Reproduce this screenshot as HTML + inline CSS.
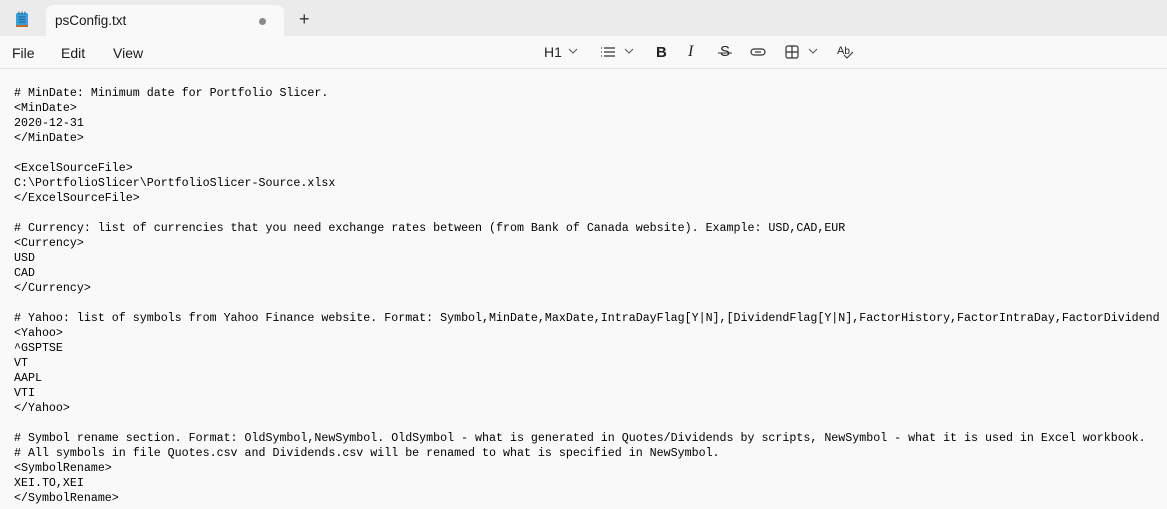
<!DOCTYPE html>
<html><head><meta charset="utf-8"><style>
*{margin:0;padding:0;box-sizing:border-box}
body{width:1167px;height:509px;overflow:hidden;background:#f9f9f9;font-family:"Liberation Sans",sans-serif;position:relative}
.tabbar{position:absolute;left:0;top:0;width:1167px;height:36px;background:#ebebeb}
.tab{position:absolute;left:46px;top:5px;width:238px;height:31px;background:#f9f9f9;border-radius:7px 7px 0 0}
.tab span{position:absolute;left:9px;top:8px;font-size:13.5px;color:#1a1a1a}
.dot{position:absolute;left:213px;top:13px;width:7px;height:7px;border-radius:50%;background:#8a8a8a}
.plus{position:absolute;left:299px;top:9px;font-size:18px;color:#333;font-weight:300}
.menu{position:absolute;top:45px;font-size:14px;color:#1a1a1a}
.sep{position:absolute;left:0;top:68px;width:1167px;height:1px;background:#e5e5e5}
pre{position:absolute;left:14px;top:85.5px;font-family:"Liberation Mono",monospace;font-size:11.65px;line-height:15px;color:#000}
.tb{position:absolute;top:44px;font-size:14px;color:#222}
</style></head><body>
<div class="tabbar">
<svg style="position:absolute;left:15px;top:11px" width="14" height="17" viewBox="0 0 14 17"><rect x="1" y="2" width="12" height="14" rx="1.5" fill="#3b9fd8"/><rect x="1" y="14" width="12" height="2" fill="#c06a2a"/><path d="M3.5 6h7M3.5 8.5h7M3.5 11h7" stroke="#1d5f8a" stroke-width="1"/><path d="M4 0.5v3M7 0.5v3M10 0.5v3" stroke="#1d5f8a" stroke-width="1"/></svg>
<div class="tab"><span>psConfig.txt</span><div class="dot"></div></div>
<div class="plus">+</div>
</div>
<div class="menu" style="left:12px">File</div>
<div class="menu" style="left:61px">Edit</div>
<div class="menu" style="left:113px">View</div>
<div class="tb" style="left:544px">H1</div>
<svg style="position:absolute;left:568px;top:48px" width="10" height="6"><path d="M1 1l4 4 4-4" stroke="#555" fill="none"/></svg>
<svg style="position:absolute;left:600px;top:46px" width="16" height="12"><path d="M1 2h1M1 6h1M1 10h1M4 2h11M4 6h11M4 10h11" stroke="#333" stroke-width="1.2"/></svg>
<svg style="position:absolute;left:624px;top:48px" width="10" height="6"><path d="M1 1l4 4 4-4" stroke="#555" fill="none"/></svg>
<div class="tb" style="left:656px;font-weight:bold;font-size:15px">B</div>
<div class="tb" style="left:688px;font-family:'Liberation Serif',serif;font-style:italic;font-size:16px;top:43px">I</div>
<div class="tb" style="left:720px;font-size:15px;top:43px">S</div>
<svg style="position:absolute;left:718px;top:52px" width="14" height="2"><path d="M0 1h14" stroke="#333"/></svg>
<svg style="position:absolute;left:750px;top:46px" width="16" height="12"><rect x="1" y="3" width="14" height="6" rx="3" fill="none" stroke="#333" stroke-width="1.2"/><path d="M5 6h6" stroke="#333" stroke-width="1.2"/></svg>
<svg style="position:absolute;left:785px;top:45px" width="14" height="14"><rect x="1" y="1" width="12" height="12" rx="2" fill="none" stroke="#333" stroke-width="1.2"/><path d="M7 1v12M1 7h12" stroke="#333" stroke-width="1.2"/></svg>
<svg style="position:absolute;left:808px;top:48px" width="10" height="6"><path d="M1 1l4 4 4-4" stroke="#555" fill="none"/></svg>
<div class="tb" style="left:837px;font-size:11px;top:45px">A<span style="font-size:10px">b</span></div>
<svg style="position:absolute;left:842px;top:50px" width="12" height="10"><path d="M2 5l3 3 6-6" stroke="#333" fill="none" stroke-width="1.1"/></svg>
<div class="sep"></div>
<pre># MinDate: Minimum date for Portfolio Slicer.
&lt;MinDate&gt;
2020-12-31
&lt;/MinDate&gt;

&lt;ExcelSourceFile&gt;
C:\PortfolioSlicer\PortfolioSlicer-Source.xlsx
&lt;/ExcelSourceFile&gt;

# Currency: list of currencies that you need exchange rates between (from Bank of Canada website). Example: USD,CAD,EUR
&lt;Currency&gt;
USD
CAD
&lt;/Currency&gt;

# Yahoo: list of symbols from Yahoo Finance website. Format: Symbol,MinDate,MaxDate,IntraDayFlag[Y|N],[DividendFlag[Y|N],FactorHistory,FactorIntraDay,FactorDividend
&lt;Yahoo&gt;
^GSPTSE
VT
AAPL
VTI
&lt;/Yahoo&gt;

# Symbol rename section. Format: OldSymbol,NewSymbol. OldSymbol - what is generated in Quotes/Dividends by scripts, NewSymbol - what it is used in Excel workbook.
# All symbols in file Quotes.csv and Dividends.csv will be renamed to what is specified in NewSymbol.
&lt;SymbolRename&gt;
XEI.TO,XEI
&lt;/SymbolRename&gt;</pre>
</body></html>
